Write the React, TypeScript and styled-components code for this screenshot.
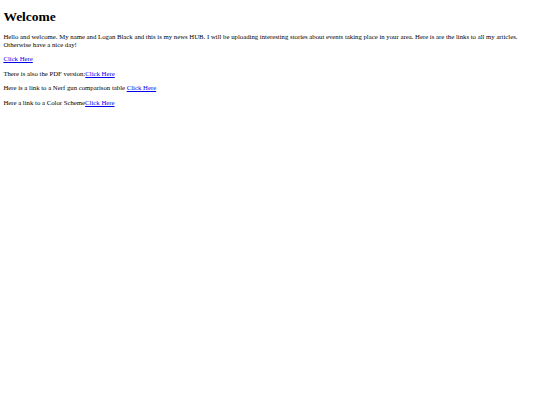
import styled, { createGlobalStyle } from "styled-components";

const GlobalStyle = createGlobalStyle`
body {
  margin: 3.375px;
  font-family: "Liberation Serif", "Times New Roman", serif;
  font-size: 6.75px;
  line-height: 7.8px;
  color: #000;
  background: #fff;
}
`;

const Title = styled.h1`
font-size: 13.5px;
line-height: 15.5px;
font-weight: bold;
margin: 6px 0 8px;
`;

const Para = styled.p`
margin: 6.7px 0;
`;

const Anchor = styled.a`
color: #0000ee;
text-decoration: underline;
cursor: pointer;
`;

function App() {
  return (
    <>
      <GlobalStyle />
      <Title>Welcome</Title>
      <Para>
        Hello and welcome. My name and Logan Black and this is my news HUB. I will be uploading interesting stories about events taking place in your area. Here is are the links to all my articles. Otherwise have a nice day!
      </Para>
      <Para>
        <Anchor href="#">Click Here</Anchor>
      </Para>
      <Para>
        There is also the PDF version:<Anchor href="#">Click Here</Anchor>
      </Para>
      <Para>
        Here is a link to a Nerf gun comparison table <Anchor href="#">Click Here</Anchor>
      </Para>
      <Para>
        Here a link to a Color Scheme<Anchor href="#">Click Here</Anchor>
      </Para>
    </>
  );
}

export default App;
